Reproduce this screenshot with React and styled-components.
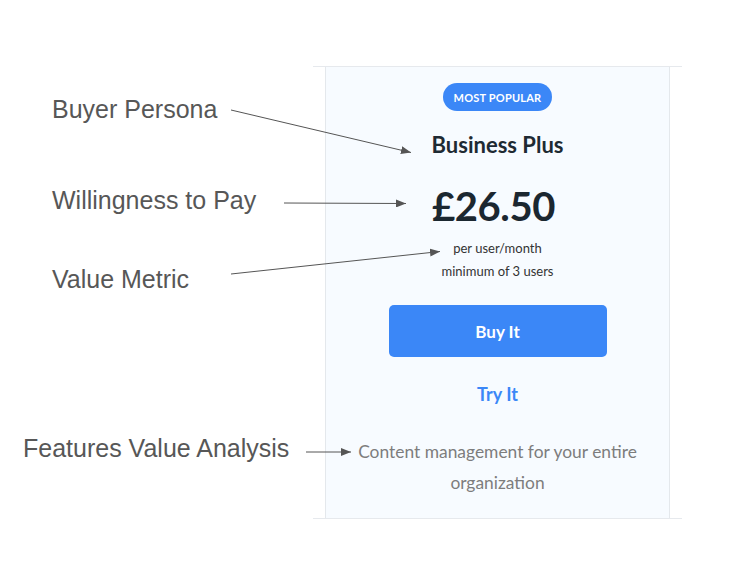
import React from 'react'
import styled, { createGlobalStyle } from "styled-components";

const GlobalStyle = createGlobalStyle`
  body {
    margin: 0;
    background: white;
  }
`;

const labels = [
  { text: "Buyer Persona", top: 95, indent: 52 },
  { text: "Willingness to Pay", top: 63, indent: 52 },
  { text: "Value Metric", top: 51, indent: 52 },
  { text: "Features Value Analysis", top: 141, indent: 23 },
];

// arrow lines, start -> tip
const arrows = [
  [231, 110, 411, 152.5],
  [284, 203, 406, 203.5],
  [231, 274, 440, 251.5],
  [306, 452, 351, 452],
];

export default function App() {
  return (
    <Stage>
      <GlobalStyle />
      <Labels>
        {labels.map((l) => (
          <Label key={l.text} $top={l.top} $indent={l.indent}>
            {l.text}
          </Label>
        ))}
      </Labels>
      <Table>
        <Card>
          <Badge>MOST POPULAR</Badge>
          <PlanName>Business Plus</PlanName>
          <Price>£26.50</Price>
          <Metric>
            per user/month
            <br />
            minimum of 3 users
          </Metric>
          <BuyButton>Buy It</BuyButton>
          <TryLink>Try It</TryLink>
          <Description>Content management for your entire organization</Description>
        </Card>
      </Table>
      <Arrows width="739" height="572">
        <defs>
          <marker id="head" markerWidth="10" markerHeight="8" refX="10" refY="4" orient="auto" markerUnits="userSpaceOnUse">
            <path d="M0 0 L10 4 L0 8 Z" fill="#555" />
          </marker>
        </defs>
        {arrows.map(([x1, y1, x2, y2], i) => (
          <line key={i} x1={x1} y1={y1} x2={x2} y2={y2} stroke="#555" strokeWidth="1" markerEnd="url(#head)" />
        ))}
      </Arrows>
    </Stage>
  );
}

const Stage = styled.div`
  position: relative;
  width: 739px;
  height: 572px;
  display: flex;
  flex-direction: row;
  overflow: hidden;
`;

const Labels = styled.div`
  width: 313px;
  display: flex;
  flex-direction: column;
`;

const Label = styled.div`
  margin-top: ${(p) => p.$top}px;
  padding-left: ${(p) => p.$indent}px;
  font-family: "Liberation Sans", Arial, sans-serif;
  font-size: 25px;
  line-height: 28px;
  color: #575757;
  white-space: nowrap;
`;

const Table = styled.div`
  margin-top: 66px;
  align-self: flex-start;
  width: 369px;
  padding: 0 12px;
  box-sizing: border-box;
  border-top: 1px solid #e6e9ed;
  border-bottom: 1px solid #e6e9ed;
`;

const Card = styled.div`
  background: #f7fbff;
  border-left: 1px solid #e4e8ec;
  border-right: 1px solid #e4e8ec;
  padding: 16px 26px 20px;
  display: flex;
  flex-direction: column;
  align-items: center;
  font-family: Lato, "Open Sans", sans-serif;
  text-align: center;
`;

const Badge = styled.div`
  width: 109px;
  height: 28px;
  border-radius: 14px;
  background: #3b87f7;
  color: white;
  font-size: 11px;
  font-weight: 700;
  letter-spacing: 0.2px;
  display: flex;
  align-items: center;
  justify-content: center;
`;

const PlanName = styled.div`
  margin-top: 21px;
  font-size: 22px;
  line-height: 26px;
  font-weight: 700;
  color: #1e2a33;
`;

const Price = styled.div`
  margin-top: 23px;
  margin-right: 8px;
  font-size: 40px;
  line-height: 50px;
  font-weight: 700;
  letter-spacing: -0.4px;
  color: #1b2730;
`;

const Metric = styled.div`
  margin-top: 6px;
  font-size: 13px;
  line-height: 23px;
  color: #333;
`;

const BuyButton = styled.button`
  margin-top: 22px;
  width: 218px;
  height: 52px;
  border: none;
  border-radius: 5px;
  background: #3b87f7;
  color: white;
  font-family: Lato, "Open Sans", sans-serif;
  font-size: 17px;
  font-weight: 700;
`;

const TryLink = styled.div`
  margin-top: 26px;
  font-size: 18px;
  line-height: 22px;
  font-weight: 700;
  color: #3b87f7;
`;

const Description = styled.div`
  margin-top: 31px;
  font-size: 17.4px;
  line-height: 31px;
  color: #7d7d7d;
`;

const Arrows = styled.svg`
  position: absolute;
  left: 0;
  top: 0;
  pointer-events: none;
`;
